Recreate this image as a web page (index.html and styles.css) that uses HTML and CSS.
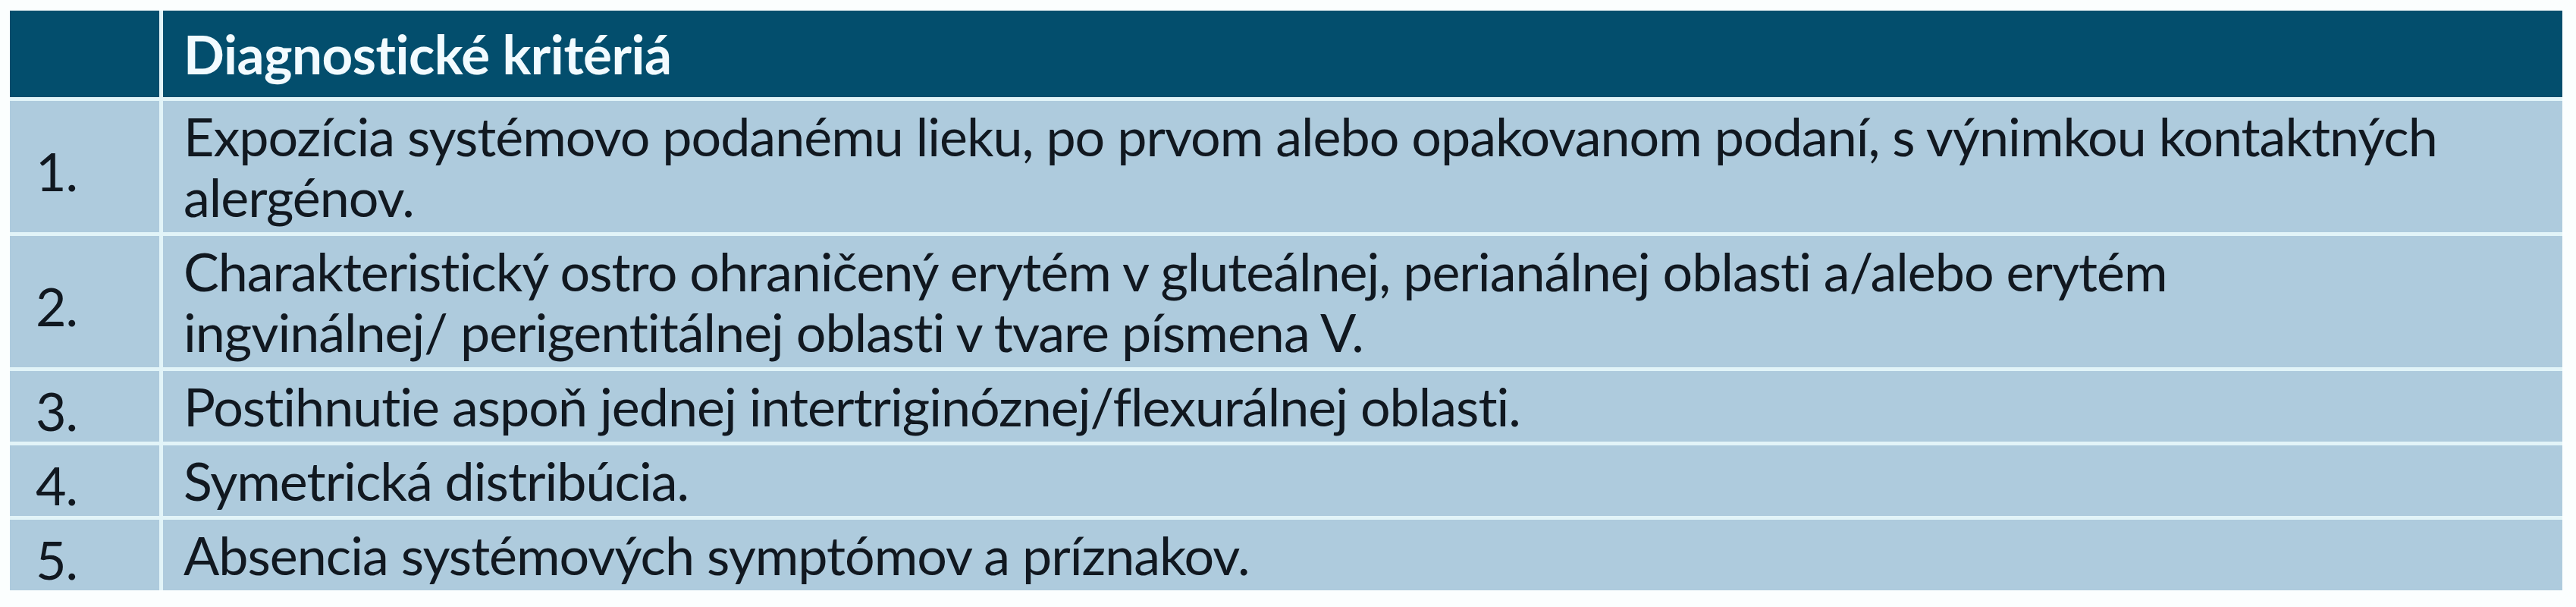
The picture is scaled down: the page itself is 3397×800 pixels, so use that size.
FILE: index.html
```html
<!DOCTYPE html>
<html lang="sk">
<head>
<meta charset="utf-8">
<title>Diagnostické kritériá</title>
<link rel="stylesheet" href="styles.css">
</head>
<body>
<div class="criteria">
  <div class="cell head num"></div>
  <div class="cell head title">Diagnostické kritériá</div>

  <div class="cell num">1.</div>
  <div class="cell text">Expozícia systémovo podanému lieku, po prvom alebo opakovanom podaní, s výnimkou kontaktných<br>alergénov.</div>

  <div class="cell num">2.</div>
  <div class="cell text">Charakteristický ostro ohraničený erytém v gluteálnej, perianálnej oblasti a/alebo erytém<br>ingvinálnej/ perigentitálnej oblasti v tvare písmena V.</div>

  <div class="cell num">3.</div>
  <div class="cell text">Postihnutie aspoň jednej intertriginóznej/flexurálnej oblasti.</div>

  <div class="cell num">4.</div>
  <div class="cell text">Symetrická distribúcia.</div>

  <div class="cell num">5.</div>
  <div class="cell text">Absencia systémových symptómov a príznakov.</div>
</div>
</body>
</html>
```

FILE: styles.css
```css
html, body {
  background: #fbfefe;
}
body {
  margin: 14px 18px 0 13px;
  font-family: Lato, "Open Sans", sans-serif;
}
.criteria {
  display: grid;
  grid-template-columns: 197px 1fr;
  gap: 5px;
  background: #e2f4f8;
}
.cell {
  background: #aecbdd;
  color: #111820;
  font-size: 70px;
  letter-spacing: -1px;
  line-height: 80px;
  padding: 6px 27px 7px;
  display: flex;
  align-items: center;
}
.num {
  padding-left: 34px;
  padding-top: 12px;
  padding-bottom: 1px;
}
.text {
  display: block;
}
.head {
  background: #034e6d;
  color: #f2fbff;
  font-weight: 700;
  padding-top: 17px;
  padding-bottom: 17px;
  min-height: 80px;
}
.title {
  font-size: 71px;
  letter-spacing: -0.5px;
}
```
